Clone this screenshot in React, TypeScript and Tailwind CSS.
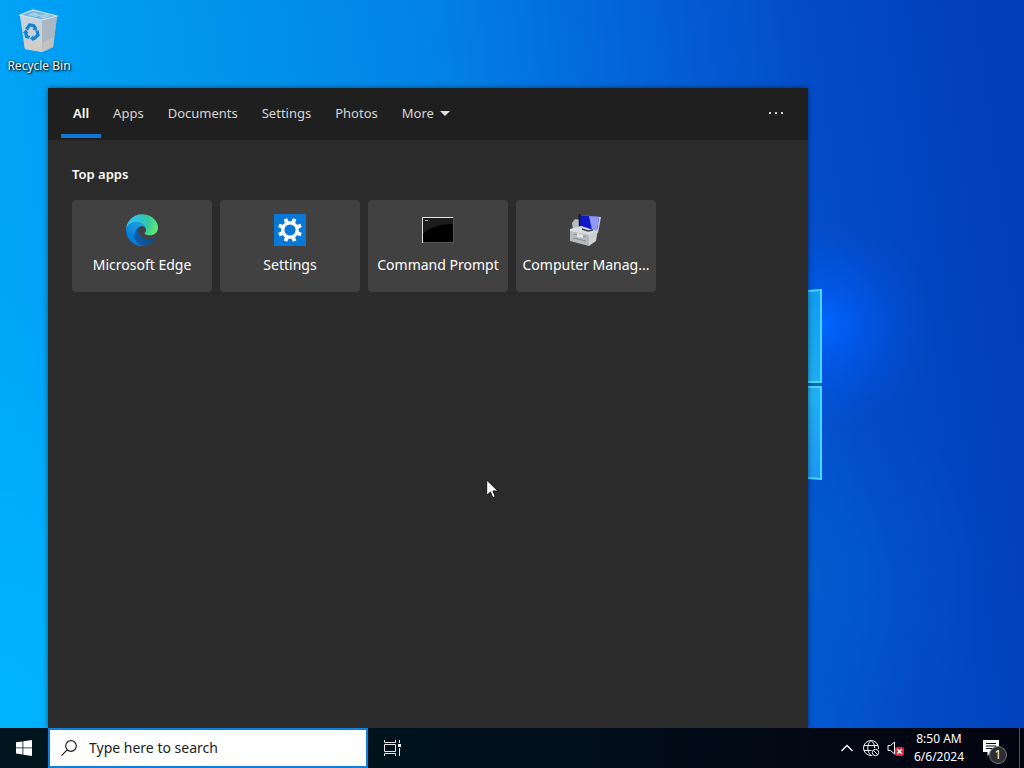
import { useState } from 'react';

const tabs = ['All', 'Apps', 'Documents', 'Settings', 'Photos'];

const topApps = [
  { name: 'Microsoft Edge', icon: <EdgeIcon /> },
  { name: 'Settings', icon: <SettingsIcon /> },
  { name: 'Command Prompt', icon: <CommandPromptIcon /> },
  { name: 'Computer Manag...', icon: <ComputerManagementIcon /> },
];

function Wallpaper() {
  return (
    <svg
      className="absolute inset-0 h-full w-full"
      viewBox="0 0 1024 768"
      preserveAspectRatio="none"
      aria-hidden="true"
    >
      <defs>
        <linearGradient id="sky" x1="0" y1="0.5" x2="1" y2="0.4">
          <stop offset="0" stopColor="#00a6f8" />
          <stop offset="0.18" stopColor="#009af0" />
          <stop offset="0.45" stopColor="#0284e6" />
          <stop offset="0.65" stopColor="#0364da" />
          <stop offset="0.84" stopColor="#034ac6" />
          <stop offset="1" stopColor="#023eb8" />
        </linearGradient>
        <radialGradient id="corner" gradientUnits="userSpaceOnUse" cx="0" cy="700" r="420">
          <stop offset="0" stopColor="#00b4ff" />
          <stop offset="1" stopColor="#00b4ff" stopOpacity="0" />
        </radialGradient>
        <radialGradient id="glow" gradientUnits="userSpaceOnUse" cx="825" cy="325" r="110">
          <stop offset="0" stopColor="#0066ff" />
          <stop offset="0.3" stopColor="#005cf4" stopOpacity="0.7" />
          <stop offset="1" stopColor="#0050d8" stopOpacity="0" />
        </radialGradient>
        <radialGradient id="beam" gradientUnits="userSpaceOnUse" cx="800" cy="580" r="190">
          <stop offset="0" stopColor="#0060cc" stopOpacity="0.7" />
          <stop offset="1" stopColor="#0058d0" stopOpacity="0" />
        </radialGradient>
        <linearGradient id="pane" x1="0" y1="0" x2="0" y2="1">
          <stop offset="0" stopColor="#109cf0" />
          <stop offset="0.55" stopColor="#20b0f0" />
          <stop offset="1" stopColor="#1c96f4" />
        </linearGradient>
      </defs>
      <rect width="1024" height="768" fill="url(#sky)" />
      <rect width="1024" height="768" fill="url(#corner)" />
      <rect width="1024" height="768" fill="url(#beam)" />
      <rect width="1024" height="768" fill="url(#glow)" />
      <path d="M700 298l122-8v92H700zM700 387h122v92l-122-8z" fill="url(#pane)" />
      <path
        d="M808 291l13-1v92h-13M808 387h13v92l-13-1"
        fill="none"
        stroke="#48d8fc"
        strokeWidth="2"
      />
      <path d="M808 384.500h14" stroke="#0668bc" strokeWidth="2" />
    </svg>
  );
}

function RecycleBinIcon() {
  return (
    <svg width="40" height="46" viewBox="0 0 40 46" aria-hidden="true">
      <path d="M1 7L6 41l17 3 11-5 4-31-15 4z" fill="#b9c6cf" />
      <path d="M1 7l22 5 1 32-18-3z" fill="#c6d3dc" />
      <path d="M23 12l15-4-4 31-11 5z" fill="#a9b7c2" />
      <path d="M1 7L14 2l24 6-15 4z" fill="#6fb3de" stroke="#d5e4ec" strokeWidth="1.200" />
      <path d="M8 7l7-3 7 3-5 2zM19 7l8-1 5 2-8 3z" fill="#a2cde6" />
      <path d="M4 31l2 10 18 3 10-5 1-10-12 6z" fill="#d6c8bc" opacity=".6" />
      <g fill="none" stroke="#1583d0" strokeWidth="3.200">
        <path d="M7.500 21.500l3-4.500 4 .5 2 3" />
        <path d="M18 22.500l1 4.500-3.500 3.500h-2" />
        <path d="M10.500 29.500l-3-1-1-4.500" />
      </g>
      <path d="M13.500 22l5 .5-1.500-4.500zM14.500 27l-3.500 3.500 3.500 3zM3.500 25l3.500-3.500 2.500 3.500z" fill="#1583d0" />
    </svg>
  );
}

function EdgeIcon() {
  return (
    <svg className="size-8" viewBox="0 0 256 256" aria-hidden="true">
      <defs>
        <linearGradient id="edgeA" x1="0.2" y1="0.6" x2="1" y2="0.7">
          <stop offset="0" stopColor="#0c59a4" />
          <stop offset="1" stopColor="#114a8b" />
        </linearGradient>
        <linearGradient id="edgeB" x1="0.8" y1="0.2" x2="0.3" y2="1">
          <stop offset="0" stopColor="#1b9de2" />
          <stop offset="0.3" stopColor="#1595df" />
          <stop offset="0.7" stopColor="#0680d7" />
          <stop offset="1" stopColor="#0078d4" />
        </linearGradient>
        <radialGradient id="edgeC" gradientUnits="userSpaceOnUse" cx="28" cy="50" r="235">
          <stop offset="0" stopColor="#35c1f1" />
          <stop offset="0.3" stopColor="#2dc3dd" />
          <stop offset="0.65" stopColor="#36c9a0" />
          <stop offset="1" stopColor="#66eb6e" />
        </radialGradient>
      </defs>
      <path
        d="M231.070 190.540c-3.400 1.770-6.900 3.350-10.500 4.710a101.100 101.100 0 0 1-35.500 6.470c-46.800 0-87.600-32.190-87.600-73.500a31.500 31.500 0 0 1 16.400-27.200c-42.300 1.780-53.200 45.880-53.200 71.700 0 73.050 67.200 80.460 81.800 80.460 7.800 0 19.600-2.280 26.700-4.500l1.300-.44a128.340 128.340 0 0 0 66.600-52.800 4 4 0 0 0-5.500-5.760z"
        fill="url(#edgeA)"
      />
      <path
        d="M105.730 241.420a79.200 79.200 0 0 1-22.740-21.340 80.720 80.720 0 0 1 29.500-120.200c3.100-1.500 8.500-4.100 15.600-4a32.400 32.400 0 0 1 25.700 13 31.900 31.900 0 0 1 6.300 18.700c0-.2 24.500-79.600-80-79.600-43.900 0-80 41.660-80 78.210a130.150 130.150 0 0 0 12.100 56 128 128 0 0 0 156.400 67.110 75.500 75.500 0 0 1-62.800-8z"
        fill="url(#edgeB)"
      />
      <path
        d="M152.330 148.860c-.9 1.100-3.400 2.500-3.400 5.700 0 2.600 1.700 5.120 4.700 7.230 14.400 10 41.500 8.680 41.600 8.680a59.560 59.560 0 0 0 30.200-8.340 61.400 61.400 0 0 0 30.400-52.860c.26-22.400-8-37.300-11.300-43.900C223.300 24.600 177.700 1.050 128.100 1.050a128 128 0 0 0-128 126.200c.48-36.540 36.800-66.050 80-66.050 3.500 0 23.460.34 42 10.070 16.340 8.580 24.900 18.940 30.850 29.210 6.180 10.670 7.280 24.150 7.280 29.520s-2.740 13.330-7.900 19.860z"
        fill="url(#edgeC)"
      />
    </svg>
  );
}

function SettingsIcon() {
  const teeth = [22.5, 67.5, 112.5, 157.5, 202.5, 247.5, 292.5, 337.5];
  return (
    <svg className="size-8" viewBox="0 0 32 32" aria-hidden="true">
      <rect width="32" height="32" fill="#0878d7" />
      {teeth.map((angle) => (
        <path
          key={angle}
          d="M13.800 9.500l.4-5.500h3.600l.4 5.500z"
          fill="#fff"
          transform={`rotate(${angle} 16 16)`}
        />
      ))}
      <circle cx="16" cy="16" r="7.200" fill="none" stroke="#fff" strokeWidth="3.200" />
    </svg>
  );
}

function CommandPromptIcon() {
  return (
    <svg className="size-8" viewBox="0 0 32 32" aria-hidden="true">
      <rect y="3" width="32" height="26" fill="#555" />
      <rect x="1" y="4" width="30" height="24" fill="#000" />
      <path d="M1 4h30v6C17 10 7 14 1 20z" fill="#1c1c1c" />
      <path d="M.5 29V3.500H31" fill="none" stroke="#e4e4e4" />
      <path d="M3 6.500h3" stroke="#aaa" />
    </svg>
  );
}

function ComputerManagementIcon() {
  return (
    <svg className="size-8" viewBox="0 0 32 32" aria-hidden="true">
      <path d="M2 9l3-4 5 1 3 7-10 3z" fill="#b9bcbf" />
      <path d="M9 1l22 2-3 16-18-3z" fill="#c5cbe4" />
      <path d="M10 1l19 2-2 15-17-3z" fill="#1118c8" />
      <path d="M19 2l10 1-2 14-5-1z" fill="#8f9bf0" />
      <path d="M9.500 0v14" stroke="#14161e" strokeWidth="1.500" />
      <path d="M0 15l11-3 16 5-7 6-20-2z" fill="#d9dddf" />
      <path d="M0 17l19 4v11L0 27z" fill="#b4babd" />
      <path d="M19 21l9-6-2 12-7 5z" fill="#cdd1d3" />
      <path d="M4 20l12 3M3 24l13 3" stroke="#868e92" />
      <path d="M7 19v4l6 1v-3z" fill="#e0e4e6" />
      <path d="M12 15l6 2 5-1" stroke="#3a4147" strokeWidth="1.500" fill="none" />
    </svg>
  );
}

function Cursor() {
  return (
    <svg
      className="pointer-events-none absolute top-[479px] left-[486px]"
      width="13"
      height="20"
      viewBox="0 0 13 20"
      aria-hidden="true"
    >
      <path
        d="M.7 1v15.500l3.700-3.500 2.400 5.700 2.500-1-2.400-5.700h5z"
        fill="#fff"
        stroke="#161616"
        strokeWidth="1"
      />
    </svg>
  );
}

function SearchPanel() {
  const [activeTab, setActiveTab] = useState('All');

  return (
    <section className="flex w-full max-w-[760px] flex-1 flex-col bg-[#2b2b2b] shadow-[0_0_5px_rgba(0,0,0,0.5)]">
      <div className="flex h-[52px] items-stretch bg-[#1f1f1f] px-[13px] text-[13px] text-[#d6d6d6]">
        {tabs.map((tab) => (
          <button
            key={tab}
            type="button"
            onClick={() => setActiveTab(tab)}
            className={
              tab === activeTab
                ? 'relative flex items-center px-3 pb-0.5 font-semibold text-white'
                : 'relative flex items-center px-3 pb-0.5'
            }
          >
            <span className="leading-5">{tab}</span>
            {tab === activeTab && (
              <span className="absolute inset-x-0 bottom-0.5 h-1 bg-[#1277d6]" />
            )}
          </button>
        ))}
        <button type="button" className="flex items-center gap-1.5 px-3 pb-0.5">
          <span className="leading-5">More</span>
          <svg width="10" height="5" viewBox="0 0 10 5" aria-hidden="true">
            <path d="M0 0h10L5 5z" fill="#e0e0e0" />
          </svg>
        </button>
        <button type="button" aria-label="Options" className="ml-auto flex items-center px-[11px] pb-0.5">
          <svg width="16" height="2" viewBox="0 0 16 2" aria-hidden="true">
            <path d="M1 0h2v2H1zM7 0h2v2H7zM13 0h2v2h-2z" fill="#d8d8d8" />
          </svg>
        </button>
      </div>

      <div className="px-6 pt-6">
        <h2 className="text-[13px] leading-5 font-semibold text-white">Top apps</h2>
        <div className="mt-4 flex flex-wrap gap-2">
          {topApps.map((app) => (
            <button
              key={app.name}
              type="button"
              className="flex h-[92px] w-[140px] flex-col items-center gap-2 rounded bg-[#414141] pt-3.5 text-white"
            >
              {app.icon}
              <span className="text-sm leading-[22px] whitespace-nowrap">{app.name}</span>
            </button>
          ))}
        </div>
      </div>
    </section>
  );
}

function Taskbar() {
  return (
    <footer className="relative flex h-10 items-stretch bg-linear-to-r from-[#00161e] via-[#00111c] to-[#03040f] text-white">
      <button type="button" aria-label="Start" className="flex w-12 items-center justify-center">
        <svg width="16" height="16" viewBox="0 0 16 16" fill="#fff" aria-hidden="true">
          <path d="M0 2.300l6.500-.9v6.100H0zM7.300 1.300L16 0v7.500H7.300zM0 8.300h6.500v6.200L0 13.600zM7.300 8.300H16V16l-8.700-1.300z" />
        </svg>
      </button>
      <label className="flex w-80 items-center gap-3 border-2 border-[#1180dc] bg-white px-[11px]">
        <svg className="shrink-0" width="16" height="16" viewBox="0 0 16 16" fill="none" stroke="#222" aria-hidden="true">
          <circle cx="10" cy="6" r="5.300" strokeWidth="1.200" />
          <path d="M6.200 9.800L.4 15.600" strokeWidth="1.200" />
        </svg>
        <input
          type="text"
          aria-label="Search"
          placeholder="Type here to search"
          className="w-full min-w-0 bg-transparent text-sm text-[#222] outline-none placeholder:text-[#222]"
        />
      </label>
      <button type="button" aria-label="Task View" className="flex w-12 items-center justify-center">
        <svg width="17" height="16" viewBox="0 0 17 16" fill="none" stroke="#e8e8e8" aria-hidden="true">
          <path d="M.5 0v2.500h11V0M.5 16v-2.500h11V16M.5 4.500h11v7H.5zM15.500 0v3M15.500 8v8" />
          <path d="M14 4h3v3h-3z" fill="#fff" stroke="none" />
        </svg>
      </button>

      <div className="ml-auto flex items-center">
        <button type="button" aria-label="Show hidden icons" className="flex w-6 justify-center">
          <svg width="12" height="8" viewBox="0 0 12 8" fill="none" stroke="#fff" aria-hidden="true">
            <path d="M.5 7L6 1.500 11.500 7" strokeWidth="1.300" />
          </svg>
        </button>
        <button type="button" aria-label="Network" className="flex w-6 justify-center">
          <svg width="17" height="17" viewBox="0 0 17 17" fill="none" stroke="#f0f0f0" aria-hidden="true">
            <circle cx="8" cy="8" r="7.500" />
            <path d="M8 .5C3.700 4 3.700 12 8 15.500M8 .5c2.700 2 3.700 4.500 3.700 7.500M1 5.500h14M1 10.500h8" />
            <circle cx="12.500" cy="12.500" r="4.500" fill="#040813" stroke="none" />
            <circle cx="12.500" cy="12.500" r="3.200" />
            <path d="M10.300 10.300l4.400 4.400" />
          </svg>
        </button>
        <button type="button" aria-label="Volume muted" className="flex w-6 justify-center">
          <svg width="17" height="17" viewBox="0 0 17 17" fill="none" stroke="#fff" aria-hidden="true">
            <path d="M1 5.500h2.500L7.500 2v12l-4-3.500H1z" />
            <rect x="8" y="7" width="9" height="9" rx="2" fill="#d8293f" stroke="none" />
            <path d="M10.300 9.300l4.400 4.400M14.700 9.300l-4.400 4.400" strokeWidth="1.400" />
          </svg>
        </button>
        <button type="button" className="w-16 text-center text-xs leading-[18px]">
          <span className="block">8:50 AM</span>
          <span className="block">6/6/2024</span>
        </button>
        <button type="button" aria-label="Notifications" className="relative flex h-10 w-12 items-center pl-3">
          <svg width="16" height="16" viewBox="0 0 16 16" aria-hidden="true">
            <path d="M0 0h16v12h-8l-3.500 4v-4H0z" fill="#fff" />
            <path d="M3 3.500h10M3 6h10M3 8.500h7" stroke="#070a14" />
          </svg>
          <span className="absolute top-[18px] left-[18px] flex size-[18px] items-center justify-center rounded-full border border-[#777] bg-[#2b2e34] text-xs">
            1
          </span>
        </button>
        <span className="mr-1 h-10 w-px bg-[#4d5259]" />
      </div>
    </footer>
  );
}

export default function App() {
  return (
    <div className="relative flex min-h-screen flex-col overflow-hidden font-['Noto_Sans','Open_Sans',sans-serif]">
      <Wallpaper />
      <main className="relative flex flex-1 flex-col">
        <button type="button" className="flex h-[88px] w-[78px] flex-col items-center gap-1 pt-2 text-white">
          <RecycleBinIcon />
          <span className="text-xs whitespace-nowrap [text-shadow:1px_1px_2px_#000,0_0_2px_#000]">
            Recycle Bin
          </span>
        </button>
        <div className="flex flex-1 pl-12">
          <SearchPanel />
        </div>
      </main>
      <Taskbar />
      <Cursor />
    </div>
  );
}
